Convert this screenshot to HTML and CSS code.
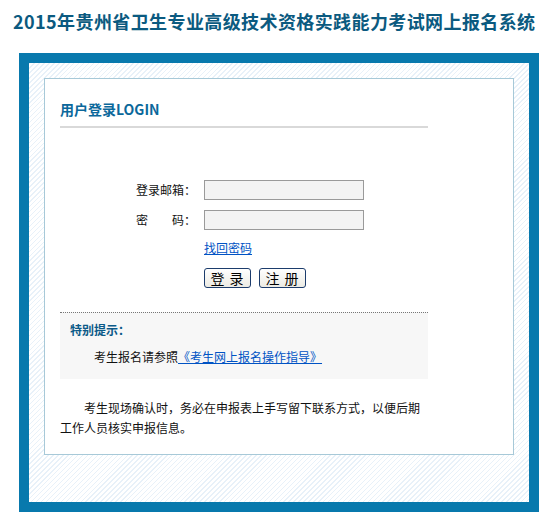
FILE: index.html
```html
<!DOCTYPE html>
<html lang="zh">
<head>
    <meta charset="UTF-8">
    <title>2015年贵州省卫生专业高级技术资格实践能力考试网上报名系统</title>
    <link rel="stylesheet" href="styles.css">
</head>
<body>
    <h1 class="site-title">2015年贵州省卫生专业高级技术资格实践能力考试网上报名系统</h1>

    <div class="frame">
        <div class="panel">
            <h2 class="panel-title">用户登录LOGIN</h2>

            <form class="login-form" onsubmit="return false;">
                <label for="email">登录邮箱：</label>
                <input type="text" id="email" class="field">

                <label for="pwd">密　　码：</label>
                <input type="password" id="pwd" class="field">

                <span></span>
                <a href="#" class="forgot">找回密码</a>

                <span></span>
                <div class="actions">
                    <button type="submit" class="btn">登 录</button>
                    <button type="button" class="btn">注 册</button>
                </div>
            </form>

            <div class="tips">
                <h3>特别提示：</h3>
                <p>考生报名请参照<a href="#">《考生网上报名操作指导》</a></p>
            </div>

            <p class="note">考生现场确认时，务必在申报表上手写留下联系方式，以便后期工作人员核实申报信息。</p>
        </div>
    </div>
</body>
</html>
```

FILE: styles.css
```css
body {
    margin: 0;
    font-family: "Noto Sans CJK SC", "Liberation Sans", sans-serif;
    font-size: 12px;
    color: #111;
    background: #fff;
}
.site-title {
    margin: 0 0 22px;
    padding: 11px 0 0 13px;
    font-size: 18px;
    line-height: 20px;
    font-weight: bold;
    letter-spacing: 0.4px;
    color: #0b5a80;
    white-space: nowrap;
}
.frame {
    width: 470px;
    margin-left: 19px;
    padding: 15px 15px 47px;
    border: 10px solid #0879ad;
    background: repeating-linear-gradient(135deg, #e8f1f9 0, #e8f1f9 1px, #fff 1px, #fff 3.5px);
}
.panel {
    border: 1px solid #a7c9d8;
    background: #fff;
    padding: 0 15px 16px;
}
.panel-title {
    width: 368px;
    margin: 0;
    padding: 20px 0 7px;
    font-size: 14px;
    line-height: 20px;
    font-weight: bold;
    color: #0b689b;
    border-bottom: 2px solid #d9d9d9;
}
.login-form {
    display: grid;
    grid-template-columns: 60px 160px;
    column-gap: 8px;
    row-gap: 10px;
    align-items: center;
    margin: 52px 0 0 76px;
}
.login-form label {
    line-height: 20px;
    white-space: nowrap;
}
.field {
    box-sizing: border-box;
    width: 160px;
    height: 20px;
    margin: 0;
    border: 1px solid #9a9a9a;
    background: #f3f3f3;
}
.forgot {
    line-height: 16px;
    color: #0053c4;
}
.actions {
    display: flex;
    gap: 8px;
    margin-top: 2px;
}
.btn {
    width: 47px;
    height: 20px;
    padding: 0;
    font-family: "Noto Sans CJK SC", sans-serif;
    font-size: 14px;
    line-height: 18px;
    letter-spacing: 1px;
    color: #000;
    border: 1px solid #1c3c6c;
    border-radius: 3px;
    background: linear-gradient(#ffffff, #ecebe4);
    cursor: pointer;
}
.tips {
    box-sizing: border-box;
    width: 368px;
    margin-top: 24px;
    padding: 7px 10px 12px;
    border-top: 1px dotted #777;
    background: #f7f7f7;
}
.tips h3 {
    margin: 0;
    font-size: 12px;
    line-height: 20px;
    color: #0b5a88;
}
.tips p {
    margin: 7px 0 0;
    line-height: 20px;
    text-indent: 2em;
}
.tips a {
    color: #0053c4;
}
.note {
    width: 368px;
    margin: 19px 0 0;
    line-height: 20px;
    text-indent: 2em;
}
```
